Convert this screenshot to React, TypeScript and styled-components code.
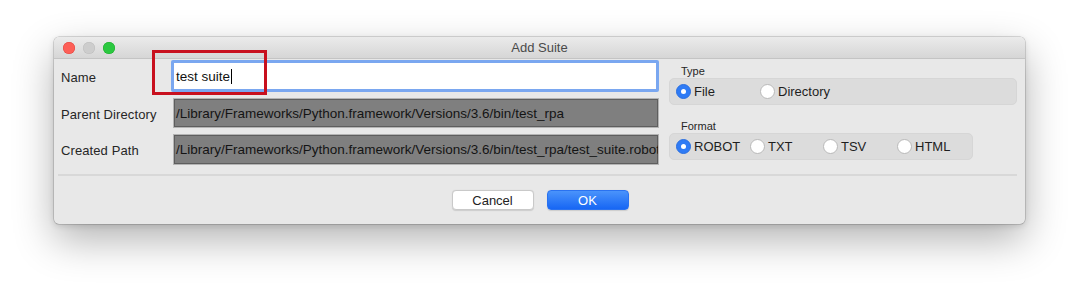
import React from "react";
import styled, { createGlobalStyle } from "styled-components";

const Global = createGlobalStyle`
  html, body { margin: 0; padding: 0; background: #ffffff; }
  body { font-family: "Liberation Sans", Arial, sans-serif; }
`;

const Page = styled.div`
  width: 1080px;
  height: 298px;
  padding: 37px 0 0 54px;
  box-sizing: border-box;
`;

const Window = styled.div`
  position: relative;
  width: 971px;
  height: 187px;
  background: #e8e8e8;
  border-radius: 5px;
  box-shadow: 0 0 0 0.5px rgba(0, 0, 0, 0.25), 0 16px 40px rgba(0, 0, 0, 0.3),
    0 2px 6px rgba(0, 0, 0, 0.12);
  display: flex;
  flex-direction: column;
`;

const TitleBar = styled.div`
  height: 21px;
  border-bottom: 1px solid #c4c4c4;
  border-radius: 5px 5px 0 0;
  background: linear-gradient(#ebebeb, #d6d6d6);
  display: flex;
  align-items: center;
  position: relative;
  padding-left: 9px;
  gap: 8px;
`;

const Light = styled.span<{ $c: string; $b: string }>`
  width: 12px;
  height: 12px;
  border-radius: 50%;
  background: ${(p) => p.$c};
  box-shadow: inset 0 0 0 0.5px ${(p) => p.$b};
`;

const Title = styled.div`
  position: absolute;
  left: 0;
  right: 0;
  text-align: center;
  font-size: 13px;
  color: #4a4a4a;
  pointer-events: none;
`;

const Content = styled.div`
  display: flex;
  padding: 1px 8px 0 7px;
  gap: 10px;
`;

const Form = styled.div`
  display: grid;
  grid-template-columns: 110px 488px;
  grid-template-rows: 32px 30px 31px;
  row-gap: 6px;
  align-items: center;
`;

const Label = styled.div`
  font-size: 13px;
  letter-spacing: 0.1px;
  color: #262626;
  padding-top: 2px;
`;

const TextInput = styled.div`
  height: 32px;
  box-sizing: border-box;
  background: #ffffff;
  border: 3px solid #7aa7f0;
  border-radius: 2px;
  display: flex;
  align-items: center;
  padding-left: 2px;
  font-size: 13.5px;
  color: #111;
`;

const Caret = styled.span`
  display: inline-block;
  width: 1px;
  height: 15px;
  background: #000;
  margin-left: 1px;
`;

const PathField = styled.div<{ $h: number }>`
  height: ${(p) => p.$h}px;
  box-sizing: border-box;
  background: #7f7f7f;
  border: 1px solid #b4b4b4;
  box-shadow: inset 0 0 0 1px #5e5e5e;
  margin-left: 2px;
  display: flex;
  align-items: center;
  padding-left: 2px;
  font-size: 13.5px;
  color: #141414;
  white-space: nowrap;
  overflow: hidden;
`;

const Side = styled.div`
  display: flex;
  flex-direction: column;
  padding-top: 4px;
`;

const GroupLabel = styled.div`
  font-size: 11px;
  color: #262626;
  padding-left: 12px;
  height: 14px;
  line-height: 14px;
`;

const Group = styled.div<{ $w: number; $mb: number }>`
  width: ${(p) => p.$w}px;
  height: 27px;
  margin-bottom: ${(p) => p.$mb}px;
  box-sizing: border-box;
  background: #dcdcdc;
  border: 1px solid #d6d6d6;
  border-radius: 5px;
  display: flex;
  align-items: center;
  padding-left: 6px;
`;

const Option = styled.label<{ $w: number }>`
  width: ${(p) => p.$w}px;
  display: flex;
  align-items: center;
  gap: 3px;
  font-size: 13px;
  color: #1e1e1e;
`;

const Dot = styled.span<{ $on: boolean }>`
  width: 15px;
  height: 15px;
  box-sizing: border-box;
  border-radius: 50%;
  background: ${(p) => (p.$on ? "#2f7bf5" : "#ffffff")};
  border: 1px solid ${(p) => (p.$on ? "#2a6fe0" : "#b9b9b9")};
  display: flex;
  align-items: center;
  justify-content: center;
  &::after {
    content: "";
    width: 5px;
    height: 5px;
    border-radius: 50%;
    background: #ffffff;
    display: ${(p) => (p.$on ? "block" : "none")};
  }
`;

const Separator = styled.div`
  height: 2px;
  background: #d8d8d8;
  margin: 9px 8px 0 4px;
`;

const Buttons = styled.div`
  display: flex;
  justify-content: center;
  gap: 13px;
  padding-top: 14px;
  padding-left: 1px;
`;

const Button = styled.div<{ $primary?: boolean }>`
  width: 82px;
  height: 20px;
  box-sizing: border-box;
  border-radius: 4px;
  display: flex;
  align-items: center;
  justify-content: center;
  font-size: 13px;
  color: ${(p) => (p.$primary ? "#ffffff" : "#222")};
  background: ${(p) =>
    p.$primary ? "linear-gradient(#4a93fb, #1766f4)" : "#ffffff"};
  border: 1px solid ${(p) => (p.$primary ? "#2a72f0" : "#c9c9c9")};
  box-shadow: 0 0.5px 1px rgba(0, 0, 0, 0.12);
`;

const Highlight = styled.div`
  position: absolute;
  left: 98px;
  top: 13px;
  width: 115px;
  height: 45px;
  box-sizing: border-box;
  border: 3px solid #c8101e;
  pointer-events: none;
`;

export default function App() {
  return (
    <>
      <Global />
      <Page>
        <Window>
          <TitleBar>
            <Light $c="#fd5f57" $b="#e0443e" />
            <Light $c="#cdcdcd" $b="#bdbdbd" />
            <Light $c="#2bc840" $b="#1aab29" />
            <Title>Add Suite</Title>
          </TitleBar>
          <Content>
            <Form>
              <Label>Name</Label>
              <TextInput>
                test suite
                <Caret />
              </TextInput>
              <Label>Parent Directory</Label>
              <PathField $h={30}>
                /Library/Frameworks/Python.framework/Versions/3.6/bin/test_rpa
              </PathField>
              <Label>Created Path</Label>
              <PathField $h={31}>
                /Library/Frameworks/Python.framework/Versions/3.6/bin/test_rpa/test_suite.robot
              </PathField>
            </Form>
            <Side>
              <GroupLabel>Type</GroupLabel>
              <Group $w={348} $mb={14}>
                <Option $w={84}>
                  <Dot $on />
                  File
                </Option>
                <Option $w={120}>
                  <Dot $on={false} />
                  Directory
                </Option>
              </Group>
              <GroupLabel>Format</GroupLabel>
              <Group $w={304} $mb={0}>
                <Option $w={74}>
                  <Dot $on />
                  ROBOT
                </Option>
                <Option $w={73}>
                  <Dot $on={false} />
                  TXT
                </Option>
                <Option $w={74}>
                  <Dot $on={false} />
                  TSV
                </Option>
                <Option $w={70}>
                  <Dot $on={false} />
                  HTML
                </Option>
              </Group>
            </Side>
          </Content>
          <Separator />
          <Buttons>
            <Button>Cancel</Button>
            <Button $primary>OK</Button>
          </Buttons>
          <Highlight />
        </Window>
      </Page>
    </>
  );
}
